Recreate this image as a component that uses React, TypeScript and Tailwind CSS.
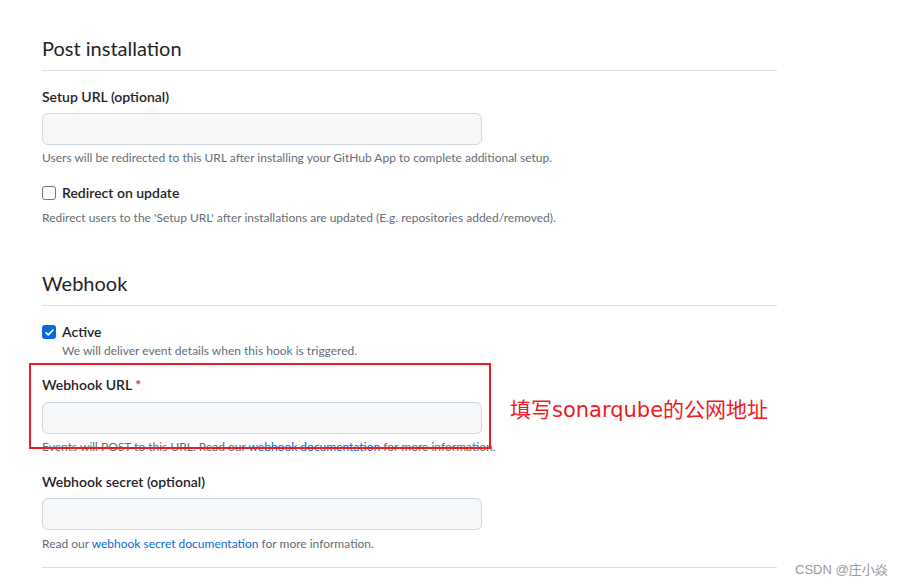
import React from "react";

function Checkbox({ checked }: { checked?: boolean }) {
  if (checked) {
    return (
      <span className="inline-flex h-[14px] w-[14px] items-center justify-center rounded-[3px] bg-[#0969da]">
        <svg viewBox="0 0 16 16" className="h-[11px] w-[11px]" fill="none" stroke="white" strokeWidth="2.4" strokeLinecap="round" strokeLinejoin="round">
          <path d="M3 8.5l3.2 3L13 4.5" />
        </svg>
      </span>
    );
  }
  return <span className="inline-block h-[14px] w-[14px] rounded-[3px] border border-[#6e7781] bg-white" />;
}

function Input({ className = "" }: { className?: string }) {
  return <div className={"h-[32px] w-[440px] rounded-[6px] border border-[#d0d7de] bg-[#f6f8fa] " + className} />;
}

export default function App() {
  return (
    <div className="relative h-[587px] w-[909px] overflow-hidden bg-white font-['Lato','Noto_Sans',sans-serif] text-[#1f2328]">
      <div className="ml-[42px] w-[735px] pt-[34px]">
        <h2 className="border-b border-[#d8dee4] pb-[8px] text-[20px] leading-[28px] font-normal">Post installation</h2>
        <div className="mt-[16px] text-[14px] leading-[20px] font-semibold">Setup URL (optional)</div>
        <Input className="mt-[6px]" />
        <p className="mt-[4px] text-[12px] leading-[18px] text-[#656d76]">
          Users will be redirected to this URL after installing your GitHub App to complete additional setup.
        </p>
        <div className="mt-[16px] flex items-center gap-[6px] text-[14px] leading-[20px] font-semibold">
          <Checkbox />
          <span>Redirect on update</span>
        </div>
        <p className="mt-[6px] text-[12px] leading-[18px] text-[#656d76]">
          Redirect users to the 'Setup URL' after installations are updated (E.g. repositories added/removed).
        </p>

        <h2 className="mt-[42px] border-b border-[#d8dee4] pb-[8px] text-[20px] leading-[28px] font-normal">Webhook</h2>
        <div className="mt-[16px] flex items-center gap-[6px] text-[14px] leading-[20px] font-semibold">
          <Checkbox checked />
          <span>Active</span>
        </div>
        <p className="ml-[20px] text-[12px] leading-[18px] text-[#656d76]">We will deliver event details when this hook is triggered.</p>

        <div className="mt-[15px] text-[14px] leading-[20px] font-semibold">
          Webhook URL <span className="text-[#cf222e]">*</span>
        </div>
        <Input className="mt-[7px]" />
        <p className="mt-[4px] text-[12px] leading-[18px] text-[#656d76]">
          Events will POST to this URL. Read our <span className="text-[#0969da]">webhook documentation</span> for more information.
        </p>

        <div className="mt-[16px] text-[14px] leading-[20px] font-semibold">Webhook secret (optional)</div>
        <Input className="mt-[6px]" />
        <p className="mt-[5px] text-[12px] leading-[18px] text-[#656d76]">
          Read our <span className="text-[#0969da]">webhook secret documentation</span> for more information.
        </p>
        <div className="mt-[14px] border-b border-[#d8dee4]" />
      </div>

      <div className="absolute left-[29px] top-[363px] h-[86px] w-[462px] border-2 border-[#ec1c24]" />
      <div className="absolute left-[510px] top-[396px] text-[21px] leading-[28px] text-[#ec1c24] font-['DejaVu_Sans','Noto_Sans_CJK_SC',sans-serif]">
        填写sonarqube的公网地址
      </div>
      <div className="absolute left-[795px] top-[561px] text-[13px] leading-[18px] text-[#9a9a9a] font-['Liberation_Sans','Noto_Sans_CJK_SC',sans-serif]">
        CSDN @庄小焱
      </div>
    </div>
  );
}
